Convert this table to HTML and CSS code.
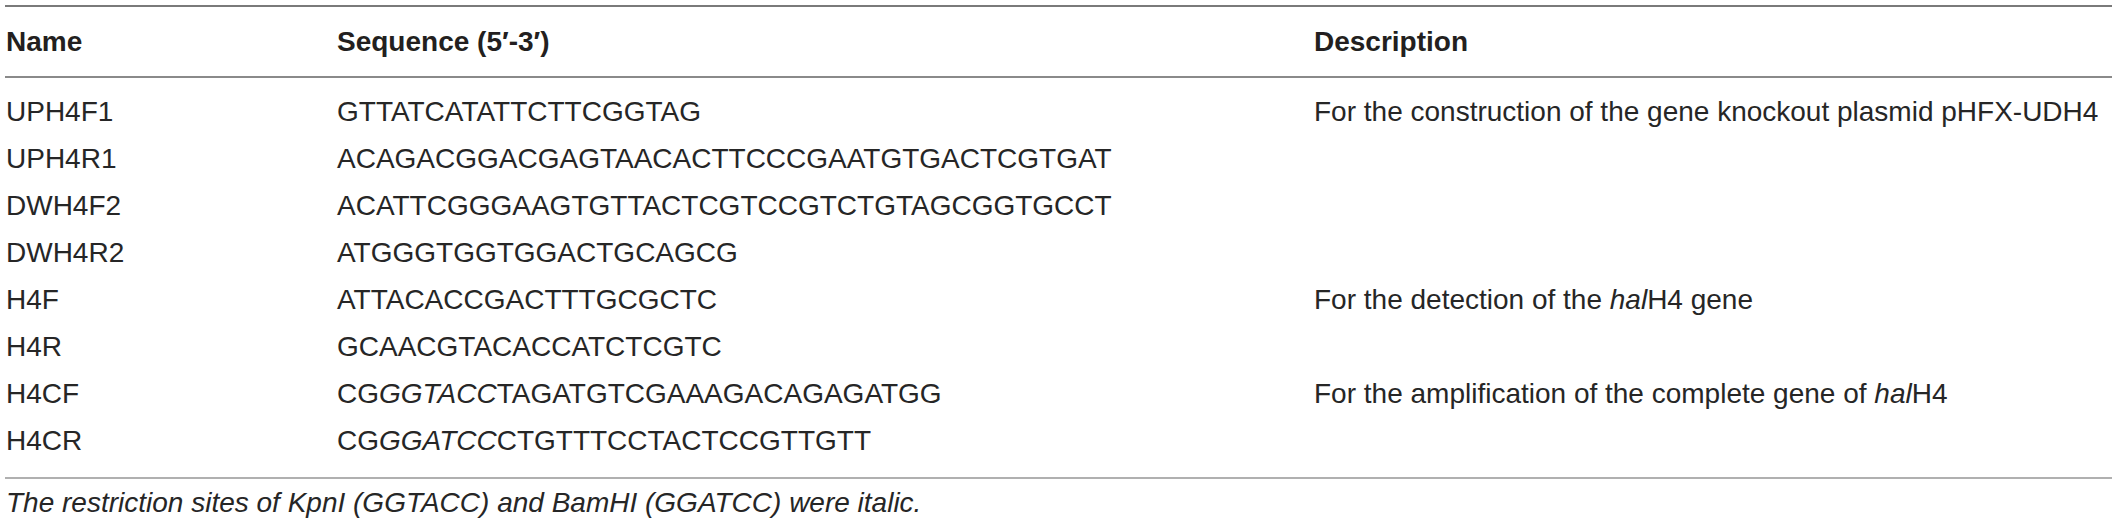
FILE: index.html
```html
<!DOCTYPE html>
<html lang="en">
<head>
<meta charset="utf-8">
<title>Primers</title>
<link rel="stylesheet" href="styles.css">
</head>
<body>
<div class="wrap">
<table class="primers">
  <colgroup>
    <col class="c-name">
    <col class="c-seq">
    <col class="c-desc">
  </colgroup>
  <thead>
    <tr><th>Name</th><th>Sequence (5′-3′)</th><th>Description</th></tr>
  </thead>
  <tbody>
    <tr><td>UPH4F1</td><td>GTTATCATATTCTTCGGTAG</td><td>For the construction of the gene knockout plasmid pHFX-UDH4</td></tr>
    <tr><td>UPH4R1</td><td>ACAGACGGACGAGTAACACTTCCCGAATGTGACTCGTGAT</td><td></td></tr>
    <tr><td>DWH4F2</td><td>ACATTCGGGAAGTGTTACTCGTCCGTCTGTAGCGGTGCCT</td><td></td></tr>
    <tr><td>DWH4R2</td><td>ATGGGTGGTGGACTGCAGCG</td><td></td></tr>
    <tr><td>H4F</td><td>ATTACACCGACTTTGCGCTC</td><td>For the detection of the <i>hal</i>H4 gene</td></tr>
    <tr><td>H4R</td><td>GCAACGTACACCATCTCGTC</td><td></td></tr>
    <tr><td>H4CF</td><td>CG<i>GGTACC</i>TAGATGTCGAAAGACAGAGATGG</td><td>For the amplification of the complete gene of <i>hal</i>H4</td></tr>
    <tr><td>H4CR</td><td>CG<i>GGATCC</i>CTGTTTCCTACTCCGTTGTT</td><td></td></tr>
  </tbody>
</table>
<p class="note">The restriction sites of KpnI (GGTACC) and BamHI (GGATCC) were italic.</p>
</div>
</body>
</html>
```

FILE: styles.css
```css
html, body {
  margin: 0;
  padding: 0;
  background: #ffffff;
}

.wrap {
  padding: 5px 5px 0 5px;
  font-family: "Liberation Sans", Arial, Helvetica, sans-serif;
  font-size: 28px;
  color: #262626;
}

.primers {
  width: 100%;
  border-collapse: collapse;
  table-layout: fixed;
}

.c-name { width: 332px; }
.c-seq { width: 977px; }

.primers thead th {
  text-align: left;
  font-weight: bold;
  color: #231f20;
  line-height: 47px;
  padding: 11px 0 11px 0;
  border-top: 2px solid #7a7a7a;
  border-bottom: 2px solid #8a8a8a;
  vertical-align: top;
}

.primers tbody td {
  line-height: 47px;
  padding: 0;
  white-space: nowrap;
  vertical-align: top;
}

.primers td:first-child,
.primers th:first-child {
  padding-left: 1px;
}

.primers tbody tr:first-child td { padding-top: 10px; }
.primers tbody tr:last-child td {
  padding-bottom: 13px;
  border-bottom: 2px solid #b0b0b0;
}

.note {
  margin: 0;
  padding-left: 1px;
  font-style: italic;
  line-height: 47px;
}
```
